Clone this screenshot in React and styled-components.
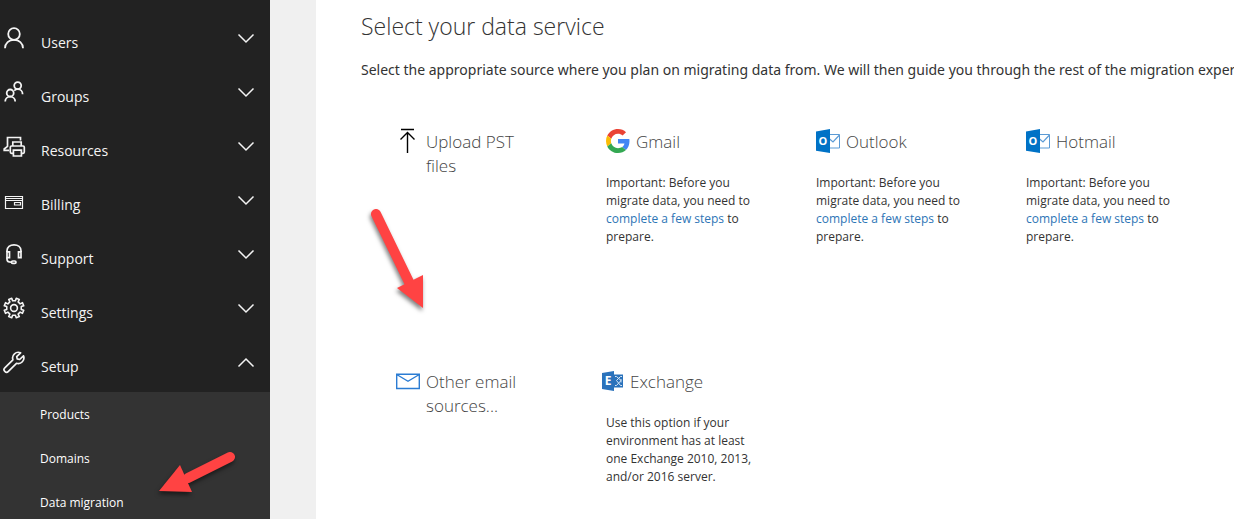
import React from "react";
import styled, { createGlobalStyle } from "styled-components";

const GlobalStyle = createGlobalStyle`
  * {
    box-sizing: border-box;
  }
  body {
    margin: 0;
    overflow: hidden;
    background: #fff;
    font-family: "Open Sans", "Noto Sans", sans-serif;
  }
`;

const Page = styled.div`
  display: flex;
  height: 100vh;
  overflow: hidden;
`;

const Sidebar = styled.nav`
  position: relative;
  flex: 0 0 270px;
  padding-top: 14px;
  background: #222;
  color: #f4f4f4;
`;

const MenuButton = styled.button`
  display: flex;
  align-items: flex-start;
  width: 100%;
  height: 54px;
  padding: 12px 12px 0 2px;
  border: 0;
  background: none;
  color: inherit;
  font-family: inherit;
  font-size: 14px;
  line-height: 34px;
  text-align: left;
  cursor: pointer;
`;

const MenuLabel = styled.span`
  flex: 1;
  padding-left: 15px;
`;

const LineIcon = styled.svg`
  display: block;
  flex: none;
  width: 24px;
  height: 24px;
  fill: none;
  stroke: currentColor;
  stroke-width: ${(props) => props.$weight || 1.5};
`;

const Submenu = styled.ul`
  height: 100%;
  margin: 0;
  padding: 1px 0 0;
  list-style: none;
  background: #333;
`;

const SubmenuLink = styled.a`
  display: block;
  padding-left: 40px;
  color: #fff;
  font-size: 12px;
  line-height: 44px;
  text-decoration: none;
`;

const Gutter = styled.div`
  flex: 0 0 46px;
  background: #f0f0f0;
`;

const Main = styled.main`
  position: relative;
  flex: 1;
  min-width: 0;
  padding: 8px 0 0 45px;
  overflow: hidden;
`;

const Heading = styled.h1`
  margin: 0;
  color: #333;
  font-size: 23px;
  font-weight: 300;
  line-height: 36px;
`;

const Intro = styled.p`
  margin: 14px 0 0;
  color: #333;
  font-family: "Noto Sans", "Open Sans", sans-serif;
  font-size: 14px;
  line-height: 24px;
  white-space: nowrap;
`;

const Services = styled.div`
  display: grid;
  grid-template-columns: repeat(auto-fill, 150px);
  grid-auto-rows: 240px;
  column-gap: 60px;
  padding: 48px 0 0 35px;
`;

const ServiceTitle = styled.h2`
  display: flex;
  gap: 6px;
  margin: 0;
  color: #444;
  font-size: 17px;
  font-weight: 300;
  line-height: 24px;
`;

const ServiceText = styled.p`
  margin: 20px 0 0;
  color: #333;
  font-size: 12px;
  line-height: 18px;
`;

const StepsLink = styled.a`
  color: #2e75b6;
  text-decoration: none;
`;

const ServiceIcon = styled.svg`
  display: block;
  flex: none;
  width: ${(props) => props.$width || 24}px;
  height: 24px;
  overflow: visible;
`;

const Arrow = styled.svg`
  position: absolute;
  top: ${(props) => props.$top}px;
  left: ${(props) => props.$left}px;
  overflow: visible;
  filter: drop-shadow(-1px 3px 2px rgba(0, 0, 0, 0.5));
  pointer-events: none;
`;

// eight teeth, with a notch pointing straight up
const gearPath = () => {
  const points = [];
  for (let i = 0; i < 8; i++) {
    [
      [-11, 7.4],
      [11, 7.4],
      [13, 10],
      [32, 10],
    ].forEach(([deg, r]) => {
      const a = ((i * 45 + deg - 90) * Math.PI) / 180;
      points.push(
        `${(12 + r * Math.cos(a)).toFixed(2)} ${(12 + r * Math.sin(a)).toFixed(2)}`
      );
    });
  }
  return `M${points.join("L")}Z`;
};

const UsersIcon = () => (
  <LineIcon viewBox="0 0 24 24" $weight={1.8}>
    <circle cx="12" cy="8" r="5.8" />
    <path d="M3 22.3C3 17 7 13.8 12 13.8s9 3.2 9 8.5" />
  </LineIcon>
);

const GroupsIcon = () => (
  <LineIcon viewBox="0 0 24 24" $weight={1.8}>
    <circle cx="8.2" cy="13" r="3.5" />
    <path d="M3.2 21.6c0-2.800 2.200-4.900 5-4.900s5 2.100 5 4.900" />
    <circle cx="15.7" cy="5.6" r="3.5" />
    <path d="M12.2 10.600c1-.9 2.100-1.400 3.500-1.400 2.800 0 4.900 2.200 4.900 5" />
  </LineIcon>
);

const ResourcesIcon = () => (
  <LineIcon viewBox="0 0 24 24" $weight={1.7}>
    <path d="M18.5 6.500v-3h-13v8.800L2.200 15v1.300h5" />
    <path d="M10.800 12V8h8.400v4" />
    <rect x="8.3" y="12" width="14" height="7.3" rx="1.2" />
    <path d="M11.400 16.200h8v5.800h-8z" fill="#222" />
  </LineIcon>
);

const BillingIcon = () => (
  <LineIcon viewBox="0 0 24 24" $weight={1.2}>
    <path d="M3.500 8.500h17v12h-17zM3.500 12.500h17M3.500 10.500h17" />
    <path d="M12.500 14.500h6v2.500h-6z" />
  </LineIcon>
);

const SupportIcon = () => (
  <LineIcon viewBox="0 0 24 24" $weight={1.7}>
    <path d="M5 10V8.800C5 5.200 8 2.800 12 2.800s7 2.400 7 6V10" />
    <path d="M5 9.800h2.500v5.800H5zM16.500 9.800H19v5.800h-2.500z" />
    <path d="M5 15.600v1.600c0 1.800 1.500 3 4.300 3" />
    <rect x="9.5" y="19" width="4.5" height="2.4" rx="1.2" />
  </LineIcon>
);

const SettingsIcon = () => (
  <LineIcon viewBox="0 0 24 24" $weight={1.6}>
    <path d={gearPath()} strokeLinejoin="round" />
    <circle cx="12" cy="12" r="3.4" />
  </LineIcon>
);

const SetupIcon = () => (
  <LineIcon viewBox="0 0 24 24" $weight={1.7}>
    <path
      strokeLinejoin="round"
      d="M18.600 2.800a5.700 5.700 0 0 0-7.700 7L2.800 17.800a2.500 2.500 0 0 0 3.600 3.600l8.100-8.100a5.700 5.700 0 0 0 7-7.500l-3.900 3.700-2.400-.6-.5-2.300z"
    />
  </LineIcon>
);

const Chevron = ({ open }) => (
  <LineIcon viewBox="0 0 24 24">
    <path d={open ? "M4.500 16.500 12 9l7.500 7.500" : "M4.500 8.500 12 16l7.500-7.500"} />
  </LineIcon>
);

const UploadIcon = () => (
  <ServiceIcon viewBox="0 0 24 24" fill="none" stroke="#000" strokeWidth="1.4">
    <path d="M5-.5h13M11.500 2.500V23M4.500 9.500l7-7 7 7" />
  </ServiceIcon>
);

const MailIcon = () => (
  <ServiceIcon viewBox="0 0 24 24" fill="none" stroke="#2b7cd3" strokeWidth="1.4">
    <path d="M.7 4.200h22.600v14.300H.7zM.7 4.500 12 11.300l11.300-6.800" />
  </ServiceIcon>
);

const GoogleIcon = () => (
  <ServiceIcon viewBox="0 2 48 48">
    <path
      fill="#EA4335"
      d="M24 9.500c3.540 0 6.710 1.220 9.210 3.600l6.850-6.850C35.900 2.380 30.470 0 24 0 14.620 0 6.510 5.380 2.560 13.220l7.980 6.190C12.430 13.720 17.740 9.500 24 9.500z"
    />
    <path
      fill="#4285F4"
      d="M46.980 24.550c0-1.570-.15-3.090-.38-4.550H24v9.020h12.940c-.58 2.960-2.260 5.480-4.780 7.180l7.730 6c4.510-4.180 7.090-10.360 7.090-17.650z"
    />
    <path
      fill="#FBBC05"
      d="M10.530 28.590c-.48-1.450-.76-2.990-.76-4.590s.27-3.140.76-4.590l-7.980-6.190C.92 16.460 0 20.120 0 24c0 3.880.92 7.540 2.560 10.780l7.970-6.190z"
    />
    <path
      fill="#34A853"
      d="M24 48c6.480 0 11.930-2.130 15.890-5.810l-7.730-6c-2.150 1.450-4.920 2.300-8.160 2.300-6.260 0-11.570-4.220-13.470-9.910l-7.980 6.190C6.510 42.620 14.620 48 24 48z"
    />
  </ServiceIcon>
);

const OutlookIcon = () => (
  <ServiceIcon viewBox="0 0 24 24">
    <path d="M13 4.500h10.500v13.500H13" fill="#fff" stroke="#5b9bd5" />
    <path d="M13 8.500l4 3.500 6.500-7" fill="none" stroke="#5b9bd5" strokeWidth="1.2" />
    <path d="M0 1.500 14-1v24L0 20.800z" fill="#0072c6" />
    <text
      x="6.8"
      y="15"
      fill="#fff"
      fontSize="11"
      fontWeight="700"
      textAnchor="middle"
    >
      O
    </text>
  </ServiceIcon>
);

const ExchangeIcon = () => (
  <ServiceIcon viewBox="0 0 18 24" $width={18}>
    <path d="M8 4.500h9v13H8z" fill="#2a72bb" />
    <path
      d="M9 6.500h1.500l4.500 4-4.500 5H9M16 6.500h-1.500l-4 4 4 5H16M15 9v3.500"
      fill="none"
      stroke="#d5e5f5"
    />
    <path d="M-4 3 8 1v20l-12-2z" fill="#2a72bb" />
    <text
      x="2"
      y="15"
      fill="#fff"
      fontSize="12"
      fontWeight="700"
      textAnchor="middle"
    >
      E
    </text>
  </ServiceIcon>
);

const menu = [
  { label: "Users", Icon: UsersIcon },
  { label: "Groups", Icon: GroupsIcon },
  { label: "Resources", Icon: ResourcesIcon },
  { label: "Billing", Icon: BillingIcon },
  { label: "Support", Icon: SupportIcon },
  { label: "Settings", Icon: SettingsIcon },
  { label: "Setup", Icon: SetupIcon, open: true },
];

const submenu = ["Products", "Domains", "Data migration"];

const Prepare = () => (
  <ServiceText>
    Important: Before you migrate data, you need to{" "}
    <StepsLink href="#steps">complete a few steps</StepsLink> to prepare.
  </ServiceText>
);

const Service = ({ title, Icon, children }) => (
  <section>
    <ServiceTitle>
      <Icon />
      <span>{title}</span>
    </ServiceTitle>
    {children}
  </section>
);

const App = () => {
  return (
    <Page>
      <GlobalStyle />
      <Sidebar>
        {menu.map(({ label, Icon, open }) => (
          <MenuButton key={label} type="button" aria-expanded={!!open}>
            <Icon />
            <MenuLabel>{label}</MenuLabel>
            <Chevron open={open} />
          </MenuButton>
        ))}
        <Submenu>
          {submenu.map((label) => (
            <li key={label}>
              <SubmenuLink href="#setup">{label}</SubmenuLink>
            </li>
          ))}
        </Submenu>
        <Arrow $top={452} $left={159} width="77" height="40">
          <path d="M71 5 29 26" stroke="#ff4343" strokeWidth="10" strokeLinecap="round" />
          <path d="M0 39 21 13l12 27z" fill="#ff4343" />
        </Arrow>
      </Sidebar>
      <Gutter />
      <Main>
        <Heading>Select your data service</Heading>
        <Intro>
          Select the appropriate source where you plan on migrating data from.
          We will then guide you through the rest of the migration experience.
        </Intro>
        <Services>
          <Service title="Upload PST files" Icon={UploadIcon} />
          <Service title="Gmail" Icon={GoogleIcon}>
            <Prepare />
          </Service>
          <Service title="Outlook" Icon={OutlookIcon}>
            <Prepare />
          </Service>
          <Service title="Hotmail" Icon={OutlookIcon}>
            <Prepare />
          </Service>
          <Service title="Other email sources..." Icon={MailIcon} />
          <Service title="Exchange" Icon={ExchangeIcon}>
            <ServiceText>
              Use this option if your environment has at least one Exchange
              2010, 2013, and/or 2016 server.
            </ServiceText>
          </Service>
        </Services>
        <Arrow $top={209} $left={55} width="53" height="99">
          <path d="M5 5 38 73" stroke="#ff4343" strokeWidth="10" strokeLinecap="round" />
          <path d="M26 79 52 66v33z" fill="#ff4343" />
        </Arrow>
      </Main>
    </Page>
  );
};

export default App;
